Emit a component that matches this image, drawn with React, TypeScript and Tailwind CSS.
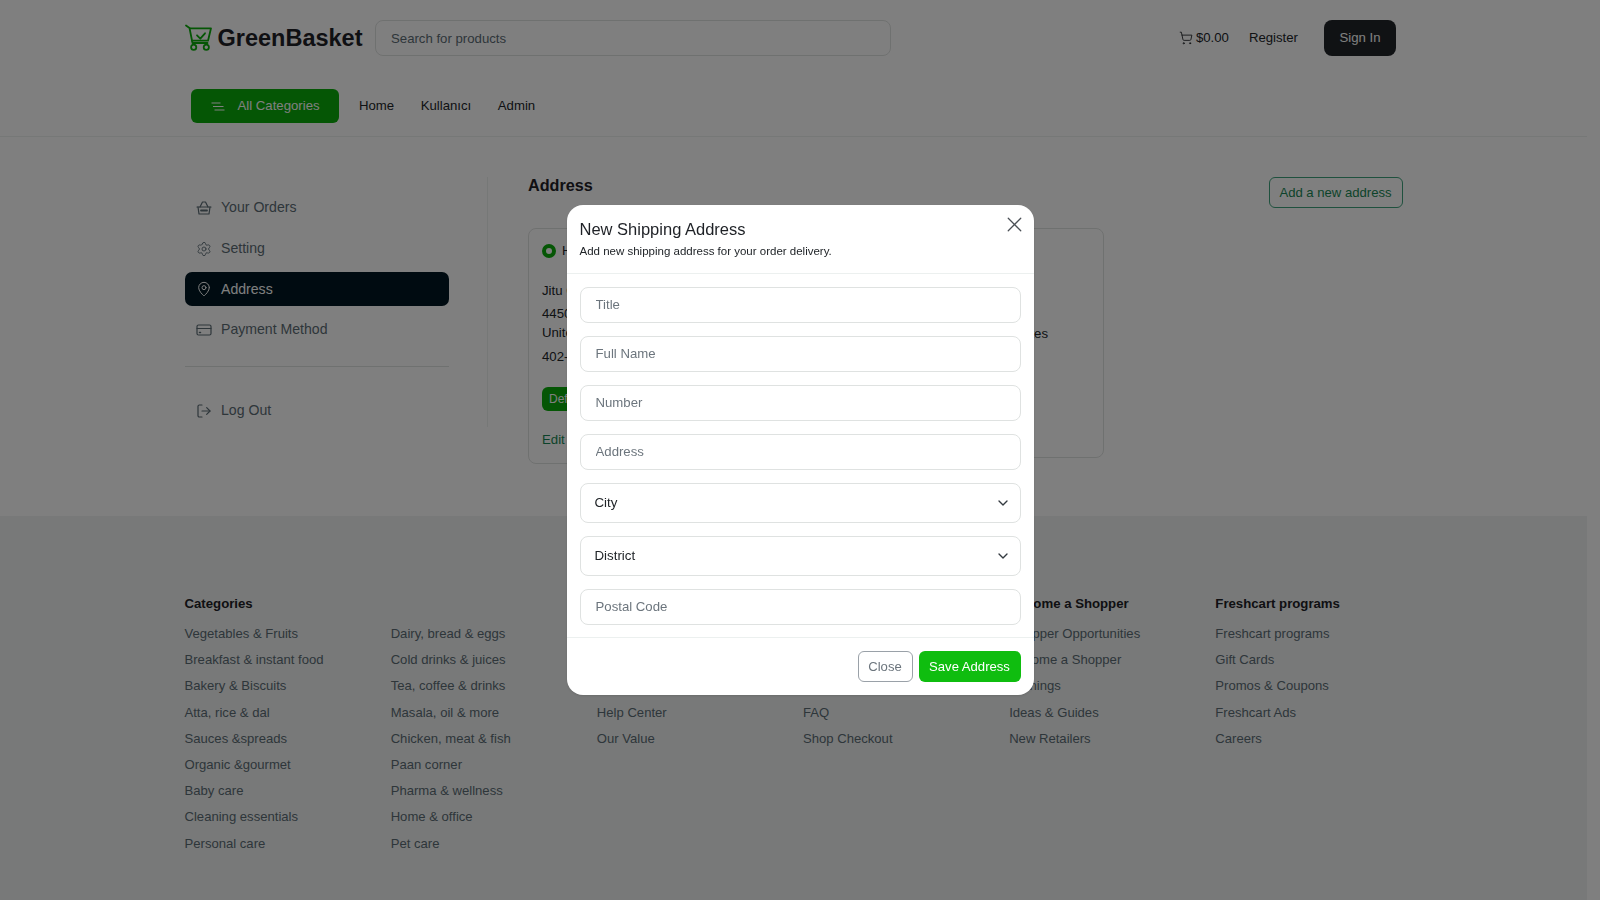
import { ChevronDown, LogOut, MapPin, Settings, ShoppingCart, X } from 'lucide-react';

const BasketIcon = ({ className }: { className?: string }) => (
  <svg width="16" height="16" viewBox="0 0 16 16" fill="none" stroke="currentColor" strokeWidth="1.200" strokeLinecap="round" strokeLinejoin="round" className={className}>
    <path d="M1 7h14" />
    <path d="M2 7l1 7h10l1-7" />
    <path d="M4 7l2.500-5h3L12 7" />
    <path d="M5 10.500h6" strokeWidth="1.800" />
  </svg>
);

const CardIcon = ({ className }: { className?: string }) => (
  <svg width="16" height="16" viewBox="0 0 16 16" fill="none" stroke="currentColor" strokeWidth="1.200" strokeLinecap="round" className={className}>
    <rect x="1" y="3" width="14" height="10" rx="1.500" />
    <path d="M1 6.500h14" />
    <path d="M3.500 10.500h1" strokeWidth="1.500" />
  </svg>
);

const PinIcon = ({ className }: { className?: string }) => <MapPin size={16} strokeWidth={1.500} className={className} />;
const GearIcon = ({ className }: { className?: string }) => <Settings size={16} strokeWidth={1.300} className={className} />;

const sideItems = [
  { label: 'Your Orders', icon: BasketIcon },
  { label: 'Setting', icon: GearIcon },
  { label: 'Address', icon: PinIcon, active: true },
  { label: 'Payment Method', icon: CardIcon },
];

const footerCols = [
  {
    title: 'Categories',
    links: ['Vegetables & Fruits', 'Breakfast & instant food', 'Bakery & Biscuits', 'Atta, rice & dal', 'Sauces &spreads', 'Organic &gourmet', 'Baby care', 'Cleaning essentials', 'Personal care'],
  },
  {
    title: '',
    links: ['Dairy, bread & eggs', 'Cold drinks & juices', 'Tea, coffee & drinks', 'Masala, oil & more', 'Chicken, meat & fish', 'Paan corner', 'Pharma & wellness', 'Home & office', 'Pet care'],
  },
  {
    title: 'Get to know us',
    links: ['Company', 'About', 'Blog', 'Help Center', 'Our Value'],
  },
  {
    title: 'For Consumers',
    links: ['Payments', 'Shipping', 'Product Returns', 'FAQ', 'Shop Checkout'],
  },
  {
    title: 'Become a Shopper',
    links: ['Shopper Opportunities', 'Become a Shopper', 'Earnings', 'Ideas & Guides', 'New Retailers'],
  },
  {
    title: 'Freshcart programs',
    links: ['Freshcart programs', 'Gift Cards', 'Promos & Coupons', 'Freshcart Ads', 'Careers'],
  },
];

const LogoCart = () => (
  <svg width="28" height="28" viewBox="0 0 28 28" fill="none" stroke="#0aad0a" strokeWidth="1.800" strokeLinecap="round" strokeLinejoin="round">
    <path d="M1 1.500L4.500 4l3 15h15" />
    <path d="M5 4.300h21l-3 12.400H7" />
    <path d="M12 11.300l3.300 3.400 4.700-5.400" />
    <circle cx="8.700" cy="23.300" r="2.600" />
    <circle cx="21.300" cy="23.300" r="2.600" />
  </svg>
);

const Field = ({ placeholder, mb = 'mb-[13px]' }: { placeholder: string; mb?: string }) => (
  <input
    placeholder={placeholder}
    className={`block w-full h-[36px] px-[15px] pb-[2px] text-[13.200px] border border-[#dfe2e1] rounded-[8px] outline-none text-[#212529] placeholder:text-[#6c757d] ${mb}`}
  />
);

const SelectField = ({ label }: { label: string }) => (
  <div className="relative h-[39.500px] mb-[13.500px]">
    <select className="appearance-none block w-full h-full px-[14px] text-[13.300px] border border-[#dfe2e1] rounded-[8px] bg-white text-[#212529] outline-none">
      <option>{label}</option>
    </select>
    <ChevronDown size={16} strokeWidth={2} className="absolute right-[10px] top-[12px] text-[#343a40]" />
  </div>
);

const App = () => {
  return (
    <div className="relative h-[900px] w-full overflow-hidden bg-white font-['Liberation_Sans',Arial,sans-serif] text-[13.200px] text-[#212529]">
      <div className="w-[1587px]">
        <header className="h-[137px] border-b border-[#ecf0ef]">
          <div className="ml-[184.500px] w-[1211.500px]">
            <div className="flex items-center h-[76.500px]">
              <div className="flex items-center w-[190.500px] gap-[5px]">
                <LogoCart />
                <span className="text-[23.500px] leading-none font-bold text-[#1e2126]">GreenBasket</span>
              </div>
              <input
                placeholder="Search for products"
                className="w-[516px] h-[36px] px-[15px] text-[13.200px] border border-[#dfe2e1] rounded-[8px] outline-none placeholder:text-[#5c6c75]"
              />
              <div className="ml-auto flex items-center">
                <ShoppingCart size={14} strokeWidth={1.500} className="mr-[3px]" />
                <span className="mr-[20px]">$0.00</span>
                <span className="mr-[26px]">Register</span>
                <button className="w-[72px] h-[36px] bg-[#212529] text-white rounded-[8px]">Sign In</button>
              </div>
            </div>
            <nav className="flex items-center h-[60.500px] pb-[1px] pl-[6.500px]">
              <button className="flex items-center w-[148px] h-[34px] pl-[20px] rounded-[6px] bg-[#0aad0a] text-white">
                <svg width="14" height="9" viewBox="0 0 14 9" fill="none" stroke="currentColor" strokeWidth="1.200" className="mr-[12.500px]">
                  <path d="M0.500 1h9M2 4.500h10.500M3.500 8h10" />
                </svg>
                All Categories
              </button>
              <span className="ml-[20px]">Home</span>
              <span className="ml-[26.500px]">Kullanıcı</span>
              <span className="ml-[26.500px]">Admin</span>
            </nav>
          </div>
        </header>

        <main className="flex h-[379px] pl-[184.500px]">
          <aside className="w-[303.500px] mt-[40px] h-[250px] border-r border-[#ecf0ef]">
            <ul className="w-[264px] pt-[14px]">
              {sideItems.map(({ label, icon: Icon, active }) => (
                <li
                  key={label}
                  className={`flex items-center h-[34px] mb-[6.600px] pl-[11.500px] rounded-[7px] text-[14.100px] ${
                    active ? 'bg-[#001722] text-white' : 'text-[#5c6c75]'
                  }`}
                >
                  <Icon className="mr-[9px]" />
                  {label}
                </li>
              ))}
            </ul>
            <div className="w-[264px] mt-[19px] border-t border-[#dfe2e1]" />
            <div className="flex items-center h-[34px] mt-[27px] pl-[11.500px] text-[14.100px] text-[#5c6c75]">
              <LogOut size={16} strokeWidth={1.800} className="mr-[9px]" />
              Log Out
            </div>
          </aside>

          <section className="w-[914.500px] pl-[40px] pt-[36px]">
            <div className="flex items-start justify-between">
              <h2 className="text-[16.200px] font-bold text-[#1e2126]">Address</h2>
              <button className="w-[134px] h-[31px] mt-[4px] text-[13.100px] border border-[#3fa37d] rounded-[6px] text-[#198754]">
                Add a new address
              </button>
            </div>
            <div className="flex items-start gap-[8px] mt-[20px]">
              <div className="w-[280px] h-[236px] px-[13px] py-[12px] border border-[#dfe2e1] rounded-[8px]">
                <div className="flex items-center h-[20px] gap-[6px]">
                  <span className="w-[14px] h-[14px] rounded-full border-[4px] border-[#0aad0a]" />
                  Home
                </div>
                <p className="mt-[20px]">Jitu Chauhan</p>
                <p className="mt-[3px] leading-[19.500px] w-[190px]">4450 North Avenue Oakland, United States</p>
                <p className="mt-[4px]">402-776-1106</p>
                <span className="block w-[100px] h-[24px] mt-[20px] leading-[24px] pl-[7px] text-[12px] rounded-[6px] bg-[#0aad0a] text-white">Default address</span>
                <p className="mt-[19px] text-[#198754]">Edit</p>
              </div>
              <div className="w-[288px] h-[230px] px-[14px] py-[14px] border border-[#dfe2e1] rounded-[8px]">
                <div className="h-[20px]">Office</div>
                <p className="mt-[61px] text-right whitespace-nowrap pr-[41px]">Pennsylvania, United States</p>
              </div>
            </div>
          </section>
        </main>

        <footer className="h-[384px] bg-[#f0f3f2] pl-[184.500px] pt-[78px]">
          <div className="grid grid-cols-6 w-[1237px]">
            {footerCols.map((col) => (
              <div key={col.links[0]}>
                <h6 className="h-[18px] mb-[9px] text-[13.200px] font-bold text-[#1e2126]">{col.title}</h6>
                <ul>
                  {col.links.map((link) => (
                    <li key={link} className="h-[26.200px] leading-[26px] text-[13.100px] text-[#5c6c75]">{link}</li>
                  ))}
                </ul>
              </div>
            ))}
          </div>
        </footer>
      </div>

      <div className="fixed inset-0 z-10 flex items-center justify-center bg-black/50">
        <div className="w-[467px] h-[490px] bg-white rounded-[16px] shadow-sm">
          <div className="relative h-[69px] px-[13px] pt-[15px] border-b border-[#ecf0ef]">
            <h5 className="text-[16.500px] leading-[18px] text-[#1e2126]">New Shipping Address</h5>
            <p className="mt-[6px] text-[11.500px] leading-[14px] text-[#212529]">Add new shipping address for your order delivery.</p>
            <X size={25} strokeWidth={1.200} className="absolute right-[7px] top-[6.500px] text-[#4a4f55]" />
          </div>
          <div className="h-[364px] px-[13px] pt-[13px] border-b border-[#ecf0ef]">
            <Field placeholder="Title" />
            <Field placeholder="Full Name" />
            <Field placeholder="Number" />
            <Field placeholder="Address" />
            <SelectField label="City" />
            <SelectField label="District" />
            <Field placeholder="Postal Code" mb="mb-0" />
          </div>
          <div className="flex justify-end gap-[6px] px-[13px] pt-[13px]">
            <button className="w-[55px] h-[31px] text-[13.100px] border border-[#9aa1a8] rounded-[6px] text-[#6c757d]">Close</button>
            <button className="w-[102px] h-[31px] text-[13.100px] rounded-[6px] bg-[#0fbd0f] text-white">Save Address</button>
          </div>
        </div>
      </div>
    </div>
  );
};

export default App;
